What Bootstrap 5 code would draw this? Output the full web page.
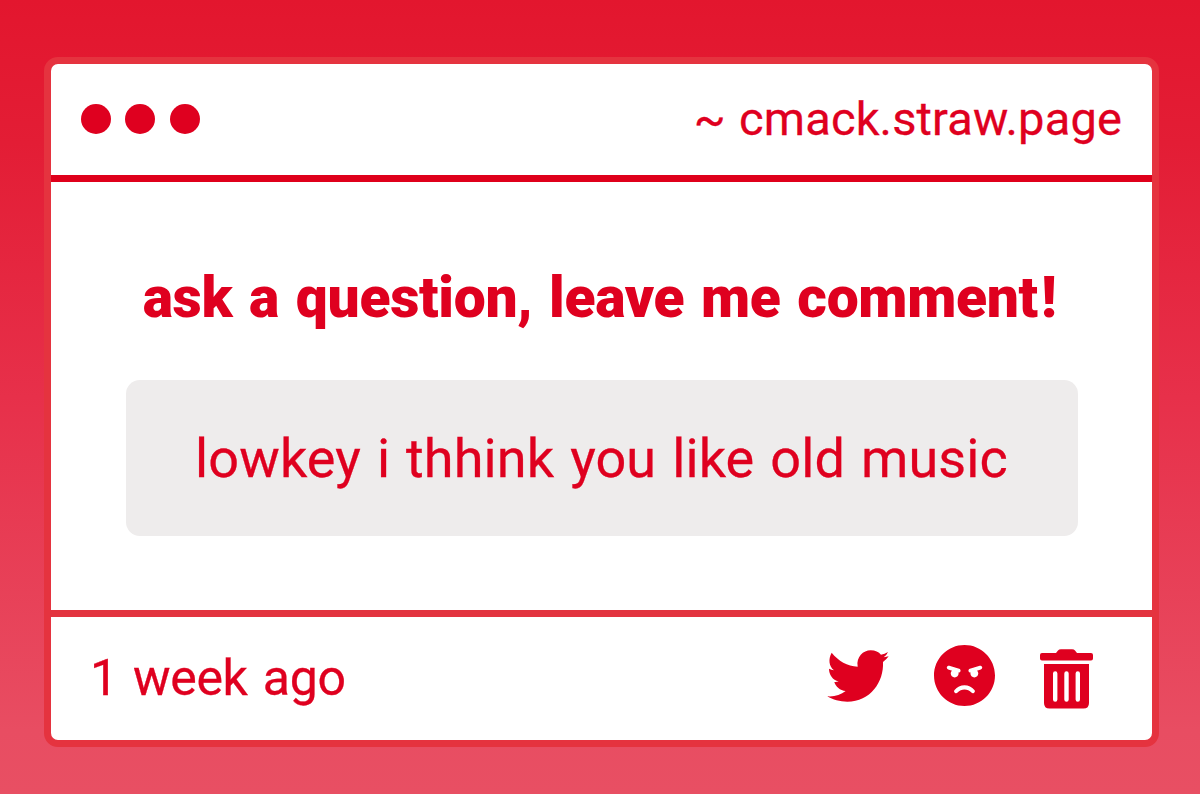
<!DOCTYPE html>
<html lang="en">
<head>
  <meta charset="UTF-8">
  <meta name="viewport" content="width=device-width, initial-scale=1.0">
  <title>cmack.straw.page</title>
  <link href="https://cdn.jsdelivr.net/npm/bootstrap@5.3.3/dist/css/bootstrap.min.css" rel="stylesheet">
  <style>
    body {
      font-family: Roboto, "Liberation Sans", sans-serif;
      color: #df001f;
      background: linear-gradient(#e3162e, #e31d35 18%, #e7304a 50%, #e84d62 92%, #e84f63);
      padding: 57px 41px 47px 44px;
      overflow: hidden;
    }

    .window {
      border: 7px solid #e5333f;
      border-radius: 14px;
      color: inherit;
    }

    .window-header {
      height: 118px;
      padding: 0 30px 1px 29.5px;
      border-bottom: 7px solid #df001b;
    }

    .dots {
      gap: 14.7px;
    }

    .dot {
      width: 30px;
      height: 30px;
      background-color: #df001f;
    }

    .site-name {
      font-size: 47px;
      letter-spacing: 0.15px;
      word-spacing: 1.5px;
      -webkit-text-stroke: 0.3px;
    }

    .window-body {
      padding: 0 74.5px;
    }

    .prompt {
      font-size: 57px;
      font-weight: 900;
      line-height: 68px;
      letter-spacing: -0.3px;
      word-spacing: 2.8px;
      margin: 82px -20px 48px -24px;
    }

    .prompt span {
      margin-left: 3px;
    }

    .message {
      height: 155.5px;
      padding-top: 1px;
      border-radius: 14px;
      background-color: #eeecec;
      font-size: 54px;
      letter-spacing: 0.1px;
      word-spacing: 2.5px;
      -webkit-text-stroke: 0.3px;
    }

    .window-footer {
      height: 130px;
      padding: 0 59px 0 39px;
      border-top: 7px solid #e3343f;
    }

    .time-ago {
      font-size: 50px;
      letter-spacing: -0.3px;
      word-spacing: 3px;
      -webkit-text-stroke: 0.3px;
    }

    .actions {
      gap: 45px;
    }

    .icon-bird,
    .icon-angry {
      margin-bottom: 6px;
    }
  </style>
</head>
<body class="vh-100 d-flex">

<div class="window card flex-grow-1">
  <!-- Title bar -->
  <div class="window-header d-flex align-items-center justify-content-between">
    <div class="dots d-flex">
      <span class="dot rounded-circle"></span>
      <span class="dot rounded-circle"></span>
      <span class="dot rounded-circle"></span>
    </div>
    <div class="site-name text-nowrap">~ cmack.straw.page</div>
  </div>

  <!-- Question and answer -->
  <div class="window-body flex-grow-1">
    <h1 class="prompt text-center text-nowrap">ask a question, leave me comment<span>!</span></h1>
    <div class="message d-flex align-items-center justify-content-center text-nowrap">lowkey i thhink you like old music</div>
  </div>

  <!-- Footer -->
  <div class="window-footer d-flex align-items-center justify-content-between">
    <div class="time-ago text-nowrap">1 week ago</div>
    <div class="actions d-flex align-items-center">
      <svg class="icon-bird" width="62" height="52" viewBox="51 59 186 156" fill="currentColor" aria-hidden="true">
        <path d="M65 67C85 92 112 107 143 109C138 80 160 60 182 60C196 60 206 65 213 73Q224 71 234 65Q230 75 221 81Q229 80 236 78Q229 88 219 95C222 155 181 214 112 214C90 214 68 208 52 198C72 200 92 194 107 182C90 181 77 169 73 155Q79 156 86 153C68 149 57 133 57 115Q64 119 72 120C57 107 54 88 65 67Z"/>
      </svg>
      <svg class="icon-angry" width="61" height="61" viewBox="0 8 496 496" fill="currentColor" aria-hidden="true">
        <path d="M248 8C111 8 0 119 0 256s111 248 248 248 248-111 248-248S385 8 248 8zM136 240c0-9.300 4.100-17.500 10.500-23.400l-31-9.300c-8.500-2.500-13.300-11.500-10.700-19.900 2.500-8.500 11.400-13.200 19.900-10.700l80 24c8.500 2.500 13.300 11.500 10.700 19.900-2.100 6.900-8.400 11.400-15.300 11.400-.5 0-1.100-.2-1.700-.2.7 2.700 1.700 5.300 1.700 8.200 0 17.700-14.300 32-32 32S136 257.700 136 240zm168 154.200c-27.800-33.400-84.200-33.400-112.100 0-13.500 16.300-38.200-4.200-24.600-20.500 20-24 49.400-37.600 80.600-37.600s60.600 13.800 80.600 37.600c13.800 16.500-11.100 36.600-24.500 20.500zm76.600-186.900l-31 9.300c6.300 5.800 10.500 14.100 10.500 23.400 0 17.700-14.300 32-32 32s-32-14.300-32-32c0-2.900.9-5.600 1.700-8.200-.6.1-1.100.2-1.700.2-6.900 0-13.200-4.500-15.300-11.400-2.500-8.500 2.300-17.400 10.700-19.900l80-24c8.400-2.500 17.400 2.300 19.900 10.700 2.500 8.500-2.300 17.400-10.800 19.900z"/>
      </svg>
      <svg class="icon-trash" width="53" height="60" viewBox="0 0 53 60" fill="currentColor" aria-hidden="true">
        <path d="M2 4H16L18 1.500Q19 .3 21 .3H32Q34 .3 35 1.500L37 4H51Q53 4 53 6V9.500Q53 11.500 51 11.500H2Q0 11.500 0 9.500V6Q0 4 2 4Z"/>
        <path fill-rule="evenodd" d="M4 15H49V54Q49 59.500 43.500 59.500H9.500Q4 59.500 4 54ZM13 24.500V50.500a2.200 2.200 0 0 0 4.400 0V24.500a2.200 2.200 0 0 0-4.400 0ZM24.300 24.500V50.500a2.200 2.200 0 0 0 4.400 0V24.500a2.200 2.200 0 0 0-4.400 0ZM35.600 24.500V50.500a2.200 2.200 0 0 0 4.400 0V24.500a2.200 2.200 0 0 0-4.400 0Z"/>
      </svg>
    </div>
  </div>
</div>

<script src="https://cdn.jsdelivr.net/npm/bootstrap@5.3.3/dist/js/bootstrap.bundle.min.js"></script>
</body>
</html>
